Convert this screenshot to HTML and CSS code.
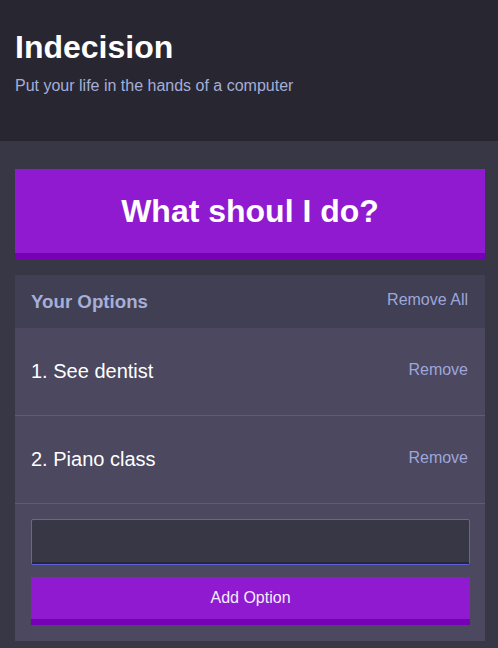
FILE: index.html
```html
<!DOCTYPE html>
<html lang="en">
<head>
<meta charset="utf-8">
<title>Indecision</title>
<link rel="stylesheet" href="styles.css">
</head>
<body>
<header class="header">
  <div class="container">
    <h1 class="header__title">Indecision</h1>
    <p class="header__subtitle">Put your life in the hands of a computer</p>
  </div>
</header>
<main class="container">
  <button class="big-button">What shoul I do?</button>
  <section class="widget">
    <div class="widget-header">
      <h3 class="widget-header__title">Your Options</h3>
      <button class="button-link">Remove All</button>
    </div>
    <div class="option">
      <p class="option__text">1. See dentist</p>
      <button class="button-link">Remove</button>
    </div>
    <div class="option">
      <p class="option__text">2. Piano class</p>
      <button class="button-link">Remove</button>
    </div>
    <form class="add-option">
      <div class="add-option__field">
        <input class="add-option__input" type="text" name="option">
      </div>
      <button class="button" type="button">Add Option</button>
    </form>
  </section>
</main>
</body>
</html>
```
FILE: styles.css
```css
* { box-sizing: border-box; }
html, body { margin: 0; padding: 0; }
body {
  background: #383746;
  font-family: "Liberation Sans", Arial, sans-serif;
  color: #fff;
}
.container {
  padding: 0 13px 0 15px;
  width: 498px;
}
.header {
  background: #282631;
  height: 141px;
  padding-top: 28px;
}
.header__title {
  margin: 0;
  font-size: 32px;
  line-height: 1.2;
  font-weight: bold;
  color: #fff;
}
.header__subtitle {
  margin: 10px 0 0;
  font-size: 16px;
  line-height: 1.2;
  color: #a5afd7;
}
.big-button {
  display: block;
  width: 100%;
  margin: 28px 0 16px;
  height: 90px;
  padding: 0;
  border: none;
  border-bottom: 6px solid #7700b6;
  background: #8f1acf;
  color: #fff;
  font-family: inherit;
  font-size: 32px;
  font-weight: bold;
}
.widget {
  background: #4b485f;
}
.widget-header {
  background: #403f54;
  height: 53px;
  padding: 0 17px 0 16px;
  display: flex;
  align-items: center;
  justify-content: space-between;
}
.widget-header__title {
  margin: 0;
  font-size: 18.7px;
  font-weight: bold;
  color: #a5afd7;
}
.button-link {
  background: none;
  border: none;
  padding: 0;
  font-family: inherit;
  font-size: 16px;
  color: #9ea6da;
  margin-top: -3px;
}
.option {
  height: 88px;
  border-bottom: 1px solid #5e5b77;
  padding: 0 17px 0 16px;
  display: flex;
  align-items: center;
  justify-content: space-between;
}
.option__text {
  margin: 0;
  font-size: 20px;
  color: #fff;
}
.add-option {
  padding: 15px 15px 16px 16px;
  display: flex;
  flex-direction: column;
  gap: 12px;
}
.add-option__field {
  height: 46px;
  border: 1px solid #5b61d2;
  border-radius: 2px;
  background: #383746;
  display: flex;
}
.add-option__input {
  flex: 1;
  width: 100%;
  background: transparent;
  border: none;
  border-bottom: 2px solid #28263a;
  outline: none;
  color: #a5afd7;
  font-family: inherit;
  font-size: 16px;
  padding: 0 12px;
}
.button {
  height: 48px;
  padding: 0;
  border: none;
  border-bottom: 6px solid #7700b6;
  background: #8f1acf;
  color: #f4ecff;
  font-family: inherit;
  font-size: 16px;
}
```
